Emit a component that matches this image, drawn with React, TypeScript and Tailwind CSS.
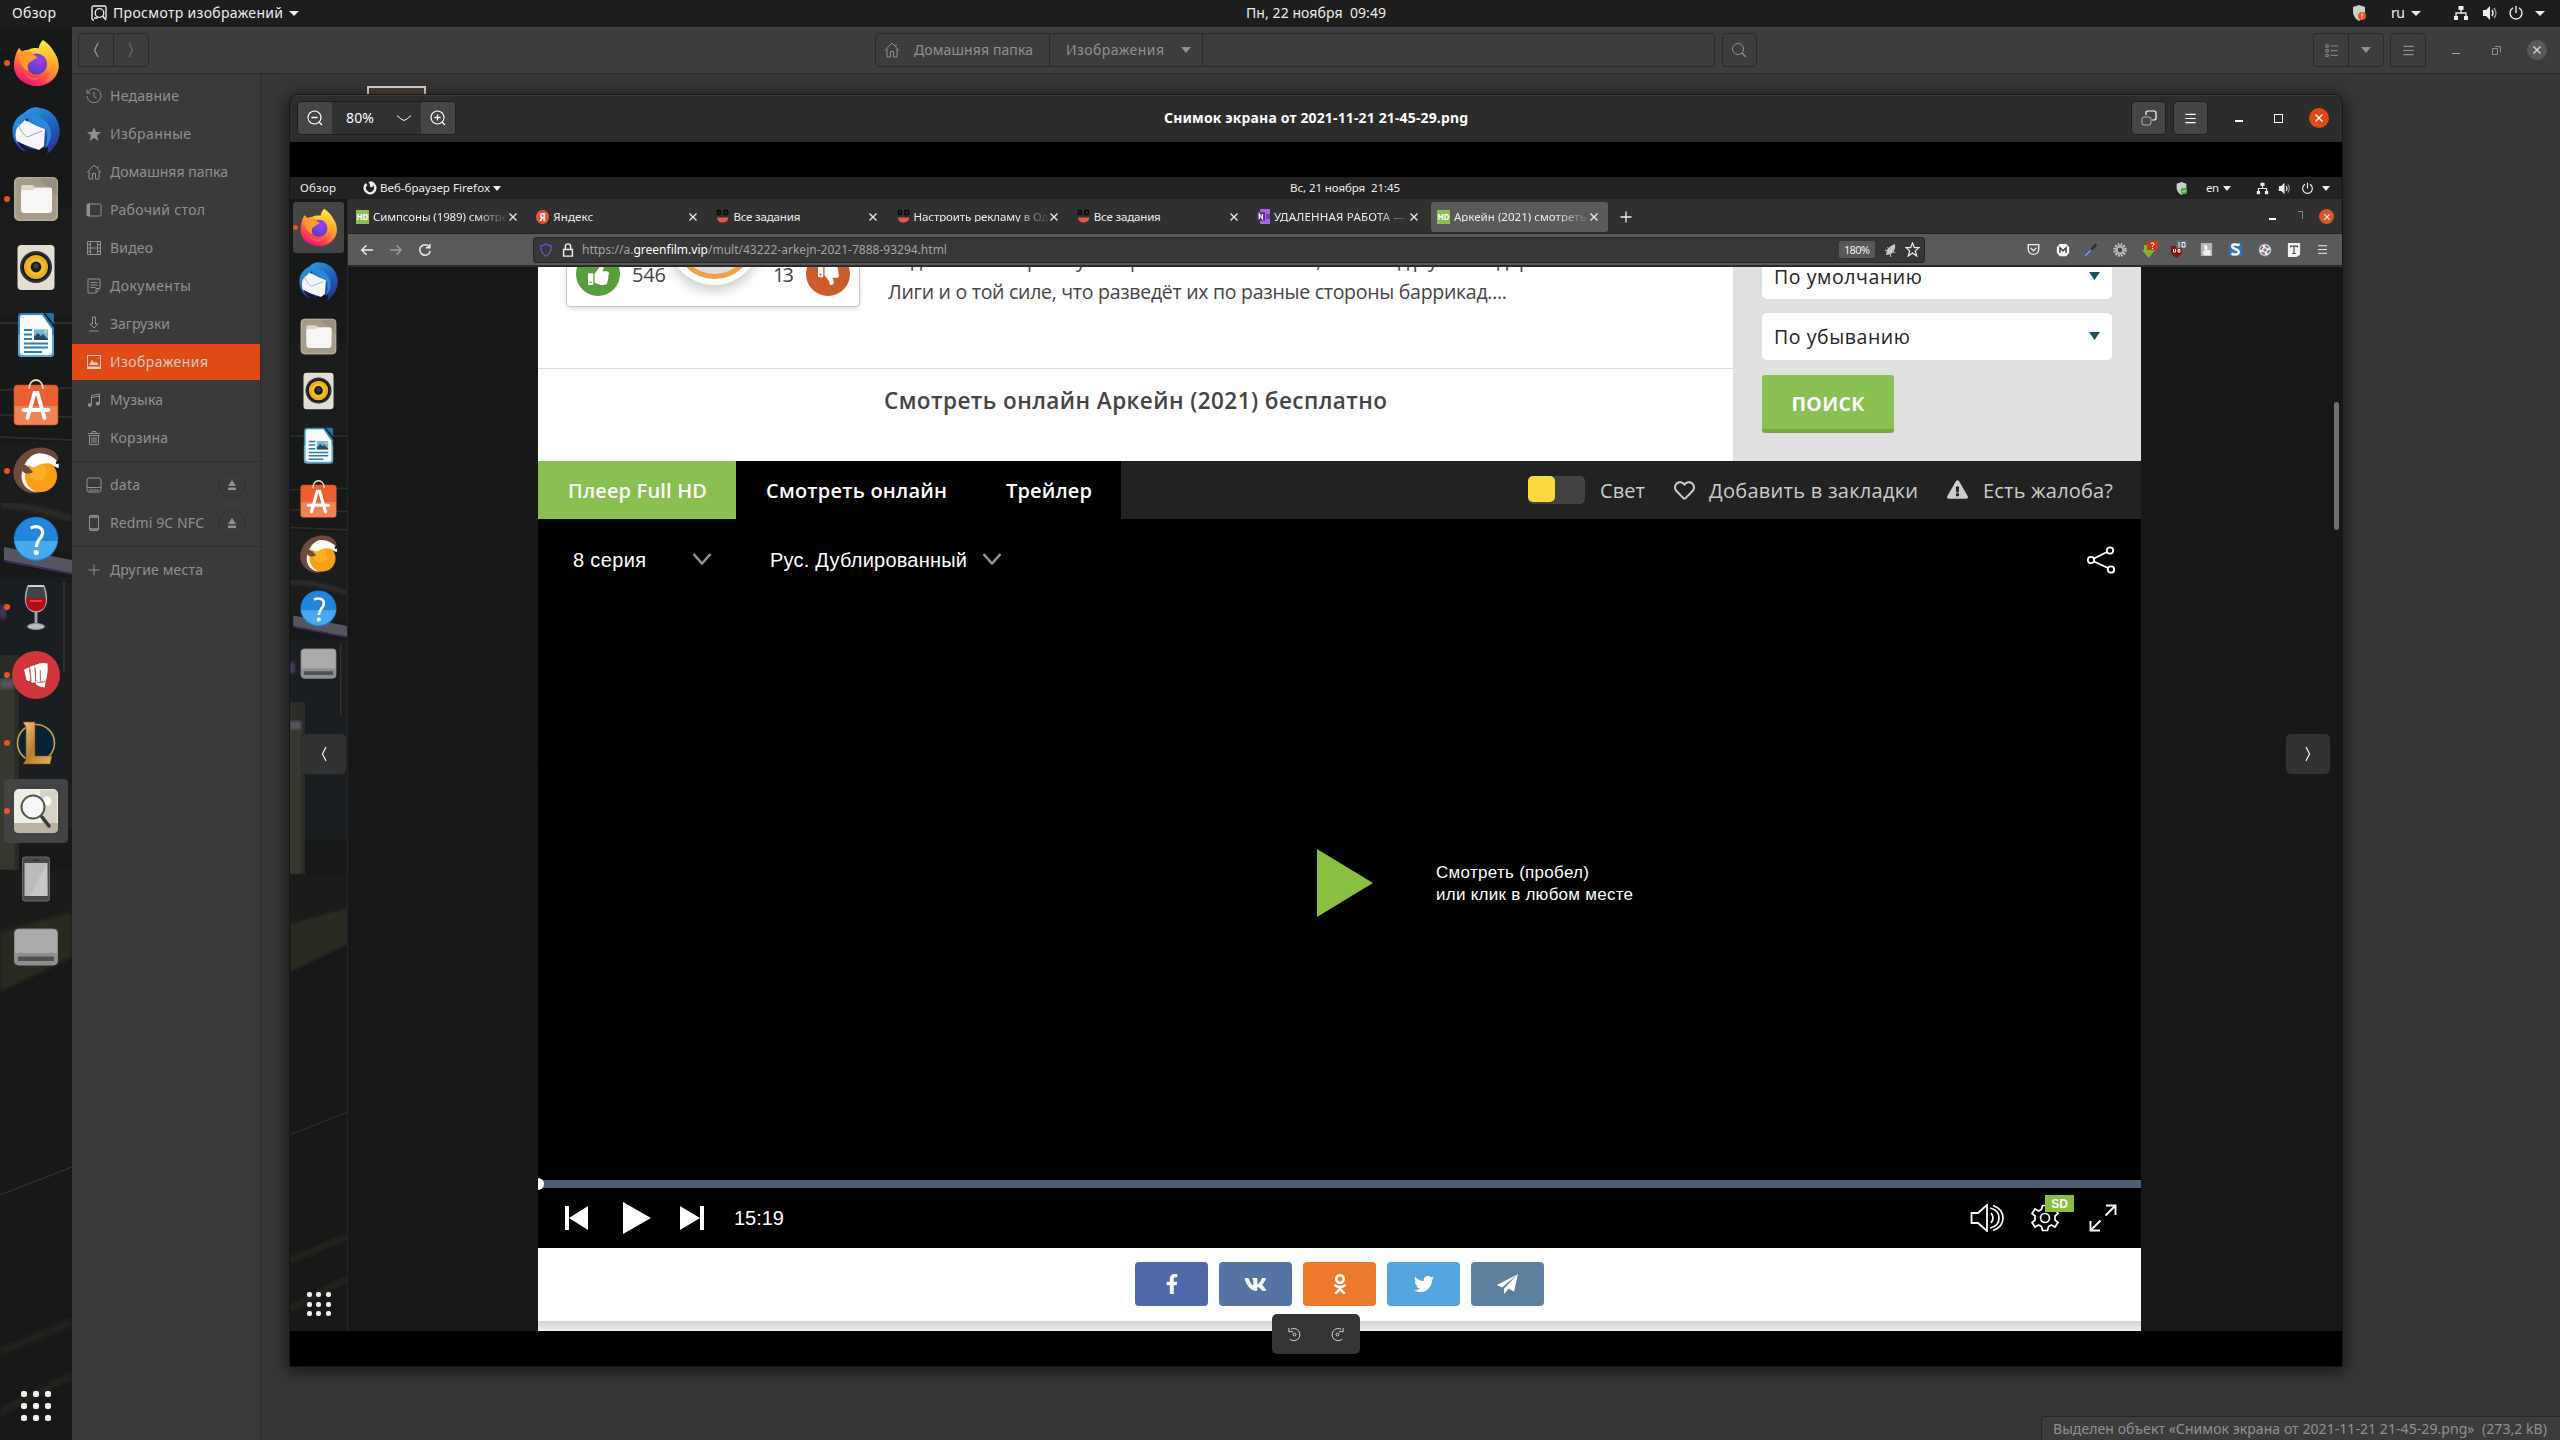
import React, { useLayoutEffect, useRef, useState } from "react";
import {
  FaFacebookF,
  FaVk,
  FaOdnoklassniki,
  FaTwitter,
  FaExclamationTriangle,
  FaRegHeart,
  FaThumbsUp,
  FaThumbsDown,
} from "react-icons/fa";

/* Text tracked so that it fills exactly `w` pixels. */
function Fit({ w, className = "", children }: { w: number; className?: string; children: React.ReactNode }) {
  const ref = useRef<HTMLSpanElement>(null);
  const [spacing, setSpacing] = useState(0);
  useLayoutEffect(() => {
    const el = ref.current;
    if (!el) return;
    const n = (el.textContent || "").length;
    setSpacing((w - el.getBoundingClientRect().width) / Math.max(1, n - 1));
  }, [w]);
  return (
    <span ref={ref} className={"inline-block shrink-0 self-auto whitespace-pre " + className} style={{ letterSpacing: spacing, marginRight: -spacing }}>
      {children}
    </span>
  );
}

type S = { s?: number; className?: string };

function Svg({ w = 16, h, vb = "0 0 16 16", className = "", children }: { w?: number; h?: number; vb?: string; className?: string; children: React.ReactNode }) {
  return (
    <svg width={w} height={h ?? w} viewBox={vb} fill="none" stroke="currentColor" className={"shrink-0 " + className}>
      {children}
    </svg>
  );
}

/* ---------- dock icons, all on a 48px grid ---------- */
function Firefox({ s = 48 }: S) {
  return (
    <Svg w={s} vb="0 0 48 48">
      <defs>
        <linearGradient id="ffa" x1="0.8" y1="0" x2="0.25" y2="1">
          <stop offset="0.05" stopColor="#fff44f" />
          <stop offset="0.35" stopColor="#ffa436" />
          <stop offset="0.65" stopColor="#ff4f4a" />
          <stop offset="1" stopColor="#e5097f" />
        </linearGradient>
        <radialGradient id="ffb" cx="0.6" cy="0.3" r="0.8">
          <stop offset="0" stopColor="#a03ff0" />
          <stop offset="1" stopColor="#4b3fb5" />
        </radialGradient>
        <linearGradient id="ffc" x1="0.6" y1="0" x2="0.5" y2="1">
          <stop offset="0" stopColor="#fff04a" />
          <stop offset="0.5" stopColor="#ffb02c" />
          <stop offset="1" stopColor="#ff6a3a" />
        </linearGradient>
      </defs>
      <g stroke="none">
        <path d="M7 9c1 2 2 3 3 4 2-2 4-2 6-2 5-3 12-2 18 0 9 4 12 10 12.500 17C46 39 36.500 47 25 47S2 39 2 27C2 20 4 13 7 9z" fill="url(#ffa)" />
        <path d="M31 1c6 4 9 8 11 12 4 5 5 11 4.500 16C45 38 38 43 32 43c6-4 8-9 6-15-2-8-9-10-11-16-1-5 2-9 4-11z" fill="url(#ffc)" />
        <circle cx="24.500" cy="25" r="10.500" fill="url(#ffb)" />
        <path d="M7 9c2 3 5 4 8 4 3-1 5 0 6 2l5 4c-3 0-4 2-6 3-5 2-5 6-3 10C8 30 6 18 7 9z" fill="#ff9a2b" />
        <path d="M10 28c2 9 12 14 20 9-2 6-16 7-20-9z" fill="#ff7139" opacity="0.7" />
      </g>
    </Svg>
  );
}
function Thunderbird({ s = 48 }: S) {
  return (
    <Svg w={s} vb="0 0 48 48">
      <defs>
        <linearGradient id="tba" x1="0.2" y1="0" x2="0.8" y2="1">
          <stop offset="0" stopColor="#2f9fe6" />
          <stop offset="0.5" stopColor="#1c66bd" />
          <stop offset="1" stopColor="#27348f" />
        </linearGradient>
      </defs>
      <g stroke="none">
        <path d="M12 6C16 2 22-1 28 1c10 1 18 9 19.500 20C49 33 42 42 35 47c1-3 1-5 1-7L12 44C5 40 0 32 .500 23 1 16 5 9 12 6z" fill="url(#tba)" />
        <path d="M5 21l8-8 12 6 8 3-1 17-5 4L5 35c-2-5-2-10 0-14z" fill="#f4f6fb" />
        <path d="M6 17c2 5 4 9 9 13l15-6" fill="none" stroke="#9aa6bd" strokeWidth="1" />
        <path d="M12 8c5 0 8 3 9 8l12 6c4 6 2 14 0 19 7-7 8-18 2-25-5-7-14-10-23-8z" fill="#2f86d8" />
        <path d="M5 34l17 9c-6 3-12 1-17-9z" fill="#20123a" />
        <circle cx="15" cy="13" r="1.300" fill="#0d2d66" />
      </g>
    </Svg>
  );
}
function Files({ s = 48 }: S) {
  return (
    <Svg w={s} vb="0 0 48 48">
      <g stroke="none">
        <rect x="2" y="2" width="44" height="44" rx="5" fill="#8d8673" />
        <rect x="2.800" y="2.800" width="42.400" height="42.400" rx="4.500" fill="#a49c88" stroke="#c6c0b1" strokeWidth="0.800" />
        <path d="M26 3h15a4 4 0 0 1 4 4v14z" fill="#8f8875" opacity="0.600" />
        <path d="M9 12q0-2 2-2h9q2 0 3 2l1.500 2H38q2 0 2 2v8H9z" fill="#dcd8cf" />
        <path d="M9 17q0-2 2-2h10l3-2.500H38q2 0 2 2V35q0 3-3 3H12q-3 0-3-3z" fill="#f7f6f4" />
      </g>
    </Svg>
  );
}
function Rhythmbox({ s = 48 }: S) {
  return (
    <Svg w={s} vb="0 0 48 48">
      <g stroke="none">
        <rect x="5.500" y="2" width="37" height="45" rx="4" fill="#e3ded2" />
        <circle cx="24" cy="24" r="16" fill="#2d3036" />
        <circle cx="24" cy="24" r="13.800" fill="#17181a" />
        <circle cx="24" cy="24" r="12" fill="#e8ae1d" />
        <circle cx="24" cy="24" r="8.500" fill="#f1c033" />
        <circle cx="24" cy="24" r="5.400" fill="#1c1c1c" />
        <circle cx="24" cy="23" r="2.500" fill="#3d3d3d" />
      </g>
    </Svg>
  );
}
function Writer({ s = 48 }: S) {
  return (
    <Svg w={s} vb="0 0 48 48">
      <g stroke="none">
        <path d="M10 2h21l11 15v25q0 4-4 4H10q-4 0-4-4V6q0-4 4-4z" fill="#2a86bd" />
        <path d="M6 24h36v18q0 4-4 4H10q-4 0-4-4z" fill="#57acd6" />
        <path d="M10 4h20l10 14v23q0 3-3 3H11q-3 0-3-3V7q0-3 2-3z" fill="#fbfbfb" />
        <path d="M33 2h7q2 0 2 2v9z" fill="#1c74a8" />
        <path d="M12 19h8M12 23.500h8M12 28h8M12 32.500h24M12 36.500h24M12 41h18" stroke="#2980ba" strokeWidth="1.800" />
        <rect x="22" y="18.500" width="14" height="10.500" fill="#6db6e3" />
        <path d="M22 29v-3l4-4 3 3 2-2 5 5v1z" fill="#33485c" />
        <circle cx="33.500" cy="20.800" r="1.500" fill="#f5cf42" />
      </g>
    </Svg>
  );
}
function Software({ s = 48 }: S) {
  return (
    <Svg w={s} vb="0 0 48 48" className="overflow-visible">
      <rect x="2" y="6" width="44" height="40" rx="3.500" fill="#ea6032" stroke="#cf4d20" strokeWidth="0.500" />
      <path d="M2.500 27h43v15q0 3.500-3.500 3.500H6q-3.500 0-3.500-3.500z" fill="#f08253" stroke="none" />
      <path d="M17 10c0-12 14-12 14 0" stroke="#f0dcb4" strokeWidth="1.800" />
      <path d="M15.500 39L22.500 14h3l7 25M11.500 31h25" stroke="#fff" strokeWidth="3.800" strokeLinecap="round" />
    </Svg>
  );
}
function Lutris({ s = 48 }: S) {
  return (
    <Svg w={s} vb="0 0 48 48">
      <g stroke="none">
        <path d="M24 1C34-1 45 3 46.500 12L38 18 20 30l12 14C20 50 6 44 2 31-1 17 10 3 24 1z" fill="#6f4a3a" />
        <path d="M21 8C28 4 40 7 47 16l-1 5-7-3-9-1c-10 2-16 9-13 20 2 5 6 8 11 8C14 46 6 34 11 22c1-5 4-10 10-14z" fill="#fbf6ee" />
        <circle cx="29" cy="29" r="16" fill="#f99f17" />
        <circle cx="26" cy="25" r="9" fill="#ffb92c" opacity="0.600" />
        <path d="M15 15c3-7 21-11 31 1l1 5c-7-6-16-6-22-2-4 2-8 1-10-4z" fill="#fff" />
        <path d="M9 20c3-5 7-1 12 5-5 3-11 2-12-5z" fill="#6f4a3a" />
        <circle cx="45.500" cy="15.500" r="1.700" fill="#2b1a12" />
      </g>
    </Svg>
  );
}
function Help({ s = 48 }: S) {
  return (
    <Svg w={s} vb="0 0 48 48">
      <circle cx="24" cy="24" r="22" fill="#1f86db" stroke="#1a6db4" strokeWidth="0.500" />
      <path d="M2.300 26h43.400A22 22 0 0 1 2.300 26z" fill="#4aa9ea" stroke="none" />
      <path d="M18.500 13c9-4 14.500 2 11 8.500-2 3-5 4.500-5 10.500" stroke="#fff" strokeWidth="3.200" />
      <circle cx="24.300" cy="37.500" r="2.500" fill="#fff" stroke="none" />
    </Svg>
  );
}
function Wine() {
  return (
    <Svg w={48} vb="0 0 48 48">
      <path d="M16 3c-4 12-4 24 8 26 12-2 12-14 8-26z" fill="#4a4d50" fillOpacity="0.800" stroke="#a5a8aa" strokeWidth="1.600" />
      <path d="M14.500 15h19c1 8-2 13-9.500 13s-10.500-5-9.500-13z" fill="#b50a14" stroke="none" />
      <path d="M18 18h12" stroke="#e25058" strokeWidth="1.500" />
      <path d="M24 29v14" stroke="#a5a8aa" strokeWidth="2.800" />
      <ellipse cx="24" cy="43.500" rx="8.500" ry="3" fill="#b9bbbd" stroke="#8c8e90" />
      <path d="M16.500 3h15" stroke="#d6d6d6" strokeWidth="2" />
    </Svg>
  );
}
function Fist() {
  return (
    <Svg w={48} vb="0 0 48 48">
      <g stroke="none">
        <circle cx="24" cy="24" r="24" fill="#d0363b" />
        <path d="M12 18.500l5-2 1.500 13q-3 1.500-4-.500z" fill="#fff" />
        <path d="M17.500 16l5-2 1 17q-3.500 1.500-4.500-.500z" fill="#fff" />
        <path d="M23 14q3-1.500 5-1.500l.500 18q-3 1.500-4.500 0z" fill="#fff" />
        <path d="M27 12.500q5-1.200 8.500 0 1 8-1 15l-1 3-4.500 0z" fill="#fff" />
        <path d="M23 31q5 1.500 10.500 0l-.800 5.500q-4-.300-8-2.500z" fill="#fff" />
      </g>
      <path d="M18 18l1.200 12M23.200 17l.500 13M28.300 19v10" stroke="#d0363b" strokeWidth="0.800" />
    </Svg>
  );
}
function League() {
  return (
    <Svg w={48} vb="0 0 48 48">
      <defs>
        <linearGradient id="lol" x1="0" y1="0" x2="1" y2="1">
          <stop offset="0" stopColor="#f0c878" />
          <stop offset="0.500" stopColor="#b97c2c" />
          <stop offset="1" stopColor="#e6b65d" />
        </linearGradient>
      </defs>
      <circle cx="24" cy="24" r="18.500" fill="#072338" stroke="#c9a24e" strokeWidth="1.600" />
      <path d="M11 3h12v34h17l-2 8H11l3-4V8z" fill="url(#lol)" stroke="#7a4b15" strokeWidth="0.600" />
    </Svg>
  );
}
function Viewer() {
  return (
    <Svg w={48} vb="0 0 48 48">
      <g stroke="none">
        <rect x="2" y="2" width="44" height="44" rx="5" fill="#eeede6" />
        <path d="M28 3h13q4 0 4 4v30H30z" fill="#d6d3c6" />
        <path d="M2 36h44v5q0 5-5 5H7q-5 0-5-5z" fill="#b9b3a0" />
        <circle cx="35" cy="14" r="4.500" fill="#fafafa" />
      </g>
      <circle cx="21" cy="20" r="11.500" fill="#f6f6f4" stroke="#55554f" strokeWidth="2" />
      <path d="M30 30l7 9" stroke="#3a3a3a" strokeWidth="3.500" strokeLinecap="round" />
    </Svg>
  );
}
function Phone() {
  return (
    <Svg w={48} vb="0 0 48 48">
      <rect x="10.500" y="2" width="27" height="44" rx="2.500" fill="#47494b" stroke="#646668" />
      <rect x="12.500" y="8" width="23" height="33" fill="#b9babb" stroke="none" />
      <path d="M35 8L18 41h17.500z" fill="#c6c7c8" stroke="none" />
      <path d="M21 5h6" stroke="#222" />
    </Svg>
  );
}
function Drive({ s = 48 }: S) {
  return (
    <Svg w={s} vb="0 0 48 48">
      <rect x="2.500" y="6" width="43" height="36" rx="4" fill="#aaa" stroke="#8b8b8b" />
      <path d="M3 30h42v8q0 4-4 4H7q-4 0-4-4z" fill="#8e8e8e" stroke="none" />
      <rect x="6" y="33.500" width="36" height="4.500" fill="#505050" stroke="none" />
    </Svg>
  );
}

function Wallpaper() {
  return (
    <svg viewBox="0 0 72 1413" preserveAspectRatio="none" className="absolute inset-0 h-full w-full" fill="none">
      <defs>
        <filter id="soft"><feGaussianBlur stdDeviation="2" /></filter>
      </defs>
      <rect width="72" height="1413" fill="#171818" />
      <rect y="180" width="72" height="110" fill="#1a1d1b" />
      <path d="M0 296H72M0 363l72-2M0 388l72 2M0 410l72 3" stroke="#2e2d26" strokeWidth="2" />
      <rect y="415" width="72" height="110" fill="#1b1c1c" />
      <path d="M0 478q30 0 72 14" stroke="#2f2f2b" strokeWidth="6" filter="url(#soft)" />
      <path d="M4 520L72 533v13L4 533z" fill="#56545e" />
      <path d="M4 534L72 547" stroke="#3c2e6c" strokeWidth="1.500" />
      <path d="M0 550h72v250H0z" fill="#1e2123" opacity="0.700" />
      <path d="M64 555v90" stroke="#3a372f" strokeWidth="1.500" />
      <path d="M0 578h6v14H0z" fill="#453c68" filter="url(#soft)" />
      <path d="M0 628h19v215H0z" fill="#2d2b25" />
      <path d="M0 652h14v190H0z" fill="#37362f" />
      <path d="M0 652h14v10H0z" fill="#54575d" filter="url(#soft)" />
      <path d="M0 843h72v62H0z" fill="#1b1b1a" />
      <path d="M0 905L72 885v45L0 965z" fill="#2c2921" filter="url(#soft)" />
      <path d="M0 1168L72 1140" stroke="#3a3936" />
      <path d="M0 1325L72 1295M0 1385L72 1348" stroke="#23221d" strokeWidth="8" filter="url(#soft)" />
    </svg>
  );
}

function AppGrid({ gap, dot }: { gap: string; dot: string }) {
  return (
    <div className={"grid grid-cols-3 " + gap}>
      {Array.from({ length: 9 }, (_, i) => (
        <span key={i} className={"rounded-[2px] bg-[#f0f0ee] " + dot} />
      ))}
    </div>
  );
}

/* ---------- small glyphs ---------- */
const Caret = ({ className = "" }: { className?: string }) => (
  <svg width="10" height="6" viewBox="0 0 10 6" preserveAspectRatio="none" className={"shrink-0 " + className}><path d="M0 0h10L5 6z" fill="currentColor" /></svg>
);
const Network = ({ s = 16 }: S) => (
  <Svg w={s}><path d="M5.500 1h5v4h-5zM1 11h4v4H1zM11 11h4v4h-4z" fill="currentColor" stroke="none" /><path d="M8 5v3M3 11V8h10v3" strokeWidth="1.300" /></Svg>
);
const Sound = ({ s = 16 }: S) => (
  <Svg w={s}><path d="M1 5h3l4-4v14l-4-4H1z" fill="currentColor" stroke="none" /><path d="M10 5q2 3 0 6" strokeWidth="1.500" /><path d="M12 3q4 5 0 10" strokeWidth="1.300" opacity="0.600" /></Svg>
);
const Power = ({ s = 16 }: S) => (
  <Svg w={s}><path d="M5 2.800a6 6 0 1 0 6 0M8 1v7" strokeWidth="1.400" /></Svg>
);
const Shield = ({ s = 16, ok = false }: S & { ok?: boolean }) => (
  <Svg w={s}><path d="M8 0l6 2v6q-1 5-6 8-5-3-6-8V2z" fill="#cfcdc9" stroke="none" /><circle cx="11" cy="11" r="4" fill={ok ? "#3fae49" : "#e95420"} stroke="none" /><path d={ok ? "M9 11l1.500 1.500L13 10" : "M11 8.500v3M11 12.500v1"} stroke="#fff" /></Svg>
);
const Menu = ({ s = 16 }: S) => <Svg w={s}><path d="M2.500 3.500h11M2.500 8h11M2.500 12.500h11" strokeWidth="1.300" /></Svg>;
const Cross = ({ s = 10 }: S) => <Svg w={s} vb="0 0 10 10"><path d="M1.500 1.500l7 7M8.500 1.500l-7 7" strokeWidth="1.300" /></Svg>;
const Home = () => <Svg><path d="M1 8.500L8 1l7 7.500M3 7v8h3.500V9.500h3V15H13V7M12 2v2" /></Svg>;
const Chev = ({ d, className = "" }: { d: string; className?: string }) => <Svg className={className}><path d={d} strokeWidth="1.100" /></Svg>;
const LEFT = "M10 1L6.500 8l3.500 7";
const RIGHT = "M6 1l3.500 7L6 15";

const places: [string, number, React.ReactNode][] = [
  ["Недавние", 69, <Svg><path d="M2 4a7 7 0 1 1-1 4M1 1.500V5h3.500M8 4v4.500l2.500 2" /></Svg>],
  ["Избранные", 81, <Svg><path d="M8 1l2 5h5l-4 3.500L12.500 15 8 11.700 3.500 15 5 9.500 1 6h5z" fill="currentColor" stroke="none" /></Svg>],
  ["Домашняя папка", 118, <Home />],
  ["Рабочий стол", 95, <Svg><rect x="1" y="2" width="14" height="12" rx="1" /><path d="M2.500 2v12" strokeWidth="3" /></Svg>],
  ["Видео", 43, <Svg><path d="M1.500 1.500h13v13h-13zM4.500 1v14M11.500 1v14M4.500 8h7M1 4.700h3M1 8h3M1 11.300h3M12 4.700h3M12 8h3M12 11.300h3" /></Svg>],
  ["Документы", 81, <Svg><path d="M2 1h12v9l-4 5H2zM4.500 4.500h7M4.500 7h7M4.500 9.500h5M10 14.500V10.500h4" /></Svg>],
  ["Загрузки", 60, <Svg><path d="M6.500 1h3v7H12l-4 4-4-4h2.500zM3 15h10" /></Svg>],
  ["Изображения", 98, <Svg><path d="M1.500 1.500h13v13h-13z" /><path d="M1 12.500h14V15H1zM3 11l3-5 2.500 3L10 7.500 13 11zM12 3l1 1.500-1.500.500z" fill="currentColor" stroke="none" /></Svg>],
  ["Музыка", 53, <Svg><path d="M5.500 13V3.500L13.500 2v9.500M5.500 5.500l8-1.500" /><circle cx="3.800" cy="13" r="2" fill="currentColor" stroke="none" /><circle cx="11.800" cy="11.500" r="2" fill="currentColor" stroke="none" /></Svg>],
  ["Корзина", 58, <Svg><path d="M2 3.500h12M6 3V1.500h4V3M3.500 6v8.500h9V6M2.500 5.500h11M6 7v6M8 7v6M10 7v6" /></Svg>],
];

const dock: { icon: React.ReactNode; dot?: boolean; on?: boolean }[] = [
  { icon: <Firefox />, dot: true },
  { icon: <Thunderbird /> },
  { icon: <Files />, dot: true },
  { icon: <Rhythmbox /> },
  { icon: <Writer /> },
  { icon: <Software /> },
  { icon: <Lutris />, dot: true },
  { icon: <Help /> },
  { icon: <Wine />, dot: true },
  { icon: <Fist />, dot: true },
  { icon: <League />, dot: true },
  { icon: <Viewer />, dot: true, on: true },
  { icon: <Phone /> },
  { icon: <Drive /> },
];

const innerDock = [
  <Firefox s={39} />, <Thunderbird s={39} />, <Files s={39} />, <Rhythmbox s={39} />, <Writer s={39} />,
  <Software s={39} />, <Lutris s={39} />, <Help s={39} />, <Drive s={39} />,
];

const HD = () => <span className="flex h-[14px] w-[13px] items-center justify-center bg-[#8abf51] text-[8px] font-bold leading-none text-white">HD</span>;
const Ya = () => <span className="flex h-[14px] w-[13px] items-center justify-center rounded-full bg-[#ee4b33] text-[10px] font-bold leading-none text-white">Я</span>;
const Do = () => (
  <Svg w={13} h={15} vb="0 0 13 15"><path d="M1.500 1.500h2.500q1 2 0 4H1.500zM8 1.500h3q1.500 2 0 4H8z" stroke="#0a0a0a" strokeWidth="1.600" /><path d="M1 8.500h11.500q-1 5-6 5T1 8.500z" fill="#e0594a" stroke="none" /></Svg>
);
const OneNote = () => (
  <Svg w={13} h={15} vb="0 0 13 15"><path d="M3 0h10v15H3z" fill="#a868dd" stroke="none" /><path d="M9 5h4v5H9z" fill="#7c3bb5" stroke="none" /><path d="M0 3h8v9H0z" fill="#5d2d95" stroke="none" /><path d="M2.300 10V5l3.200 5V5" stroke="#fff" strokeWidth="1.200" /></Svg>
);

const tabs: { icon: React.ReactNode; text: string; w: number; fade?: boolean; on?: boolean }[] = [
  { icon: <HD />, text: "Симпсоны (1989) смотре", w: 135, fade: true },
  { icon: <Ya />, text: "Яндекс", w: 40 },
  { icon: <Do />, text: "Все задания", w: 67 },
  { icon: <Do />, text: "Настроить рекламу в Од", w: 135, fade: true },
  { icon: <Do />, text: "Все задания", w: 67 },
  { icon: <OneNote />, text: "УДАЛЕННАЯ РАБОТА —", w: 131, fade: true },
  { icon: <HD />, text: "Аркейн (2021) смотреть", w: 132, fade: true, on: true },
];

const extensions = [
  <Svg w={13}><path d="M1.500 2h13v6q-1 6-6.500 6T1.500 8zM4.500 6L8 9.500 11.500 6" strokeWidth="1.700" /></Svg>,
  <Svg w={14}><path d="M4 1h8l3 4v6l-3 4H4l-3-4V5z" fill="#fff" stroke="none" /><path d="M4.500 11V5.500L8 9l3.500-3.500V11" stroke="#444" strokeWidth="1.800" /></Svg>,
  <Svg w={14}><path d="M2 14L9 7" stroke="#4a63c9" strokeWidth="3" /><path d="M1.500 14.500L7 9" stroke="#c9d2f0" strokeWidth="1" /><path d="M8.500 7.500L14 1.500" stroke="#2c2c2c" strokeWidth="3" /></Svg>,
  <Svg w={14}><circle cx="8" cy="8" r="6.500" stroke="#c4c4c4" strokeWidth="2.500" strokeDasharray="2 1.400" /><circle cx="8" cy="8" r="4" fill="#444" stroke="#b0b0b0" strokeWidth="3" /></Svg>,
  <Svg w={18} vb="0 0 18 18" className="-mt-[2px]"><path d="M4 5h7v5h4l-6.500 8L2 10h2z" fill="#80b626" stroke="none" /><path d="M7 1h11v9H7z" fill="#d1341d" stroke="none" /><path d="M11 3.500q3-1.500 3 .500 0 1-1.500 2v1M12.500 8v1" stroke="#fff" /></Svg>,
  <Svg w={18} vb="0 0 18 18" className="-mt-[2px]"><path d="M2 6h11v6q-1 4-5.500 6-4.500-2-5.500-6z" fill="#8a1010" stroke="none" /><path d="M4.500 9v3h2V9M9 9.500h2V12H9z" stroke="#fff" /><path d="M7 0h11v8.500H7z" fill="#5c646c" stroke="none" /><path d="M10 2v5.500M13 2.500h3V7h-3z" stroke="#fff" /></Svg>,
  <Svg w={13}><path d="M1 0h14v16H1z" fill="#b5b5b5" stroke="none" /><path d="M5 3q4-2 4 2v4h4v6H5l-2-5h3z" fill="#f3f3f3" stroke="none" /></Svg>,
  <Svg w={13}><path d="M0 0h16v16H0z" fill="#3173b4" stroke="none" /><path d="M13 2.500q-9-2-9 1.500c0 4 8 3 8 7s-6 3.500-9 2" stroke="#fff" strokeWidth="3" /></Svg>,
  <Svg w={14}><circle cx="8" cy="8" r="7" fill="#e8eef3" stroke="#4d93c4" strokeWidth="1" /><circle cx="8" cy="8" r="4.500" fill="#e8eef3" stroke="#c33b2d" strokeWidth="2" strokeDasharray="4 3" /><circle cx="8" cy="8" r="2" fill="#4d93c4" stroke="none" /></Svg>,
  <Svg w={14}><path d="M1 0h14v13l-4 3H1z" fill="#f2f2f2" stroke="none" /><path d="M4 5V3.500h8V5M8 3.500V12M6 12h4" stroke="#444" strokeWidth="1.300" /></Svg>,
  <Menu s={13} />,
];

/* Segments of the partly scrolled-away description line. */
const scrolledLine: [string, number][] = [
  ["на ", 23], ["два момента ", 116], ["роль ", 49], ["умов ", 54], ["рано и вечно вместе, пока их ", 268], ["друг на ", 99], ["дар", 34],
];

function InnerScreen() {
  return (
    <div className="flex h-[1154px] w-full flex-col overflow-hidden bg-[#171717] text-[#eee]">
      {/* desktop panel */}
      <div className="flex h-[22px] shrink-0 items-center bg-[#222] text-[11.500px] leading-none">
        <Fit w={36} className="ml-[10px]">Обзор</Fit>
        <Svg w={14} className="ml-[27px]"><path d="M4 3.500A6 6 0 1 0 12.500 4Q10 1.500 8.500 2q1.500 2 1 5" strokeWidth="3" /></Svg>
        <Fit w={110} className="ml-[3px]">Веб-браузер Firefox</Fit>
        <Caret className="ml-[3px] h-[5px] w-[8px]" />
        <Fit w={110} className="ml-[789px]">Вс, 21 ноября  21:45</Fit>
        <div className="ml-auto flex items-center pr-[12px]">
          <Shield s={13} ok />
          <Fit w={13} className="ml-[18px]">en</Fit>
          <Caret className="ml-[4px] mr-[25px] h-[5px] w-[8px]" />
          <Network s={13} />
          <span className="w-[9px]" /><Sound s={13} />
          <span className="w-[10px]" /><Power s={13} />
          <Caret className="ml-[8px] h-[5px] w-[8px]" />
        </div>
      </div>
      <div className="flex min-h-0 flex-1">
        {/* dock */}
        <div className="relative flex w-[58px] shrink-0 flex-col overflow-hidden border-r border-[#262626] bg-[#1c1c1c]">
          <Wallpaper />
          <div className="relative flex h-full flex-col items-center pt-[1px]">
            {innerDock.map((icon, i) => (
              <div key={i} className="flex h-[54.500px] w-full items-center justify-center">
                <div className={"relative flex h-[51px] w-[51px] items-center justify-center rounded-[3px] " + (i === 0 ? "bg-[#444]" : "")}>
                  {i === 0 && <span className="absolute left-0 top-[23px] h-[5px] w-[5px] rounded-full bg-[#e95420]" />}
                  {icon}
                </div>
              </div>
            ))}
            <div className="mt-auto pb-[15px]"><AppGrid gap="gap-[4.500px]" dot="h-[5px] w-[5px]" /></div>
          </div>
        </div>
        {/* browser */}
        <div className="flex min-w-0 flex-1 flex-col">
          <div className="flex h-[35px] shrink-0 items-center border-b border-[#232323] bg-[#303030] pt-px text-[11.500px] leading-none">
            {tabs.map((t, i) => (
              <div key={i} className={"flex h-[30px] shrink-0 items-center rounded-[3px] " + (t.on ? "ml-[9px] w-[177px] bg-[#5a5a5a] pl-[6px]" : i ? "ml-[8.200px] w-[172px] pl-[7px]" : "ml-[1px] w-[172px] pl-[7px]")}>
                {t.icon}
                <span className={"ml-[4px] flex w-[136px] items-center " + (t.fade ? "[mask-image:linear-gradient(to_right,black_75%,transparent)]" : "")}>
                  <Fit w={t.w}>{t.text}</Fit>
                </span>
                <span className="-ml-[1px]"><Cross s={10} /></span>
              </div>
            ))}
            <Svg w={12} vb="0 0 12 12" className="ml-[12px]"><path d="M6 .500v11M.500 6h11" strokeWidth="1.300" /></Svg>
            <div className="ml-auto flex items-center pr-[8px]">
              <span className="mt-[5px] h-[2px] w-[7px] bg-white" />
              <span className="ml-[22px] mt-[-3px] h-[8px] w-[5px] border-r border-t border-[#888]" />
              <span className="ml-[16px] flex h-[15px] w-[15px] items-center justify-center rounded-full bg-[#d3592b]"><Cross s={8} /></span>
            </div>
          </div>
          <div className="flex h-[33px] shrink-0 items-center border-b-2 border-[#2b2b2b] bg-[#5a5a5a] text-[11.500px] leading-none">
            <Svg w={14} className="ml-[12px]"><path d="M15 8H2M7.500 2.500L2 8l5.500 5.500" strokeWidth="1.700" /></Svg>
            <Svg w={14} className="ml-[15px] text-[#999]"><path d="M1 8h13M8.500 2.500L14 8l-5.500 5.500" strokeWidth="1.700" /></Svg>
            <Svg w={14} className="ml-[15px]"><path d="M13 4.500A6 6 0 1 0 14 9M13.500 1v4.500H9" strokeWidth="1.700" /></Svg>
            <div className="ml-[101px] flex h-[26px] w-[1392px] items-center rounded-[3px] border border-[#262626] bg-[#373737]">
              <Svg w={14} className="ml-[5px] text-[#5a5ac8]"><path d="M8 1q3 2 6 2 0 9-6 12Q2 12 2 3q3 0 6-2z" strokeWidth="1.500" /></Svg>
              <Svg w={14} className="ml-[8px]"><path d="M3 7.500h10V15H3zM5 7V4q0-3 3-3t3 3v3" strokeWidth="1.700" /></Svg>
              <Fit w={365} className="ml-[7px] mt-[1px] text-[12px] text-[#a3a3a3]">https://a.<span className="text-white">greenfilm.vip</span>/mult/43222-arkejn-2021-7888-93294.html</Fit>
              <span className="ml-auto flex h-[17px] w-[36px] items-center justify-center rounded-[2px] bg-[#585858] text-[11px]"><Fit w={26}>180%</Fit></span>
              <Svg w={14} className="ml-[9px] text-[#c9c9c9]"><path d="M3 13q0-7 9-11 1 5-4 10zM1 8l3 1M7 13l1 3M4 5l2 2M10 10l3 1" fill="currentColor" strokeWidth="1.200" /></Svg>
              <Svg w={15} className="ml-[7px] mr-[4px]"><path d="M8 1l2 5h5l-4 3.500L12.500 15 8 11.700 3.500 15 5 9.500 1 6h5z" strokeWidth="1.300" /></Svg>
            </div>
            <div className="ml-auto mr-[5px] flex">
              {extensions.map((e, i) => (
                <span key={i} className="flex h-[18px] w-[28.900px] items-center justify-center">{e}</span>
              ))}
            </div>
          </div>
          {/* page */}
          <div className="relative flex min-h-0 flex-1 bg-gradient-to-r from-[#171717] via-[#191919] to-[#171717]">
            <div className="ml-[190px] flex h-full w-[1603px] flex-col bg-white font-['Open_Sans','Noto_Sans',sans-serif] text-[#444]">
              <div className="flex h-[194px] shrink-0">
                <div className="flex w-[1195px] flex-col">
                  <div className="flex h-[102px] border-b border-[#ddd]">
                    <div className="ml-[28px] h-[40px] w-[294px] overflow-visible rounded-b-[5px] border border-t-0 border-[#c5c5c5] shadow-[0_2px_4px_#0002]">
                      <div className="flex h-[40px] text-[20px] leading-none [clip-path:inset(0_0_-20px_0)]">
                        <span className="ml-[9px] -mt-[15px] flex h-[44px] w-[44px] items-center justify-center rounded-full bg-[#579f3c] text-[21px] text-white"><FaThumbsUp /></span>
                        <Fit w={34} className="ml-[12px] -mt-[2px]">546</Fit>
                        <span className="ml-[2px] -mt-[74px] flex h-[92px] w-[92px] items-center justify-center rounded-full bg-white shadow-[0_6px_12px_#0003]">
                          <span className="h-[79px] w-[79px] rounded-full border-[5px] border-[#eea043] bg-[#dedede]" />
                        </span>
                        <Fit w={21} className="ml-[13px] -mt-[2px]">13</Fit>
                        <span className="ml-[12px] -mt-[15px] flex h-[44px] w-[44px] items-center justify-center rounded-full bg-[#cd5c2d] text-[21px] text-white"><FaThumbsDown /></span>
                      </div>
                    </div>
                    <div className="ml-[28px] flex h-[60px] flex-col items-start overflow-hidden text-[19.500px] leading-[32px]">
                      <span className="-mt-[23px] flex h-[32px]">
                        {scrolledLine.map(([t, w]) => <Fit key={t} w={w}>{t}</Fit>)}
                      </span>
                      <Fit w={619} className="h-[32px]">Лиги и о той силе, что разведёт их по разные стороны баррикад....</Fit>
                    </div>
                  </div>
                  <div className="flex flex-1 justify-center pt-[18px] text-[22.500px] font-semibold leading-[28px]">
                    <Fit w={503}>Смотреть онлайн Аркейн (2021) бесплатно</Fit>
                  </div>
                </div>
                <div className="flex flex-1 flex-col bg-[#e0e0e0] pl-[29px] text-[19.500px] leading-none text-[#222]">
                  <div className="flex h-[32px] w-[350px] items-center justify-between rounded-b-[5px] bg-white pb-[13px] pl-[12px] pr-[12px]">
                    <Fit w={148}>По умолчанию</Fit><Caret className="-mt-[2px] h-[8px] w-[11px] text-[#1f5266]" />
                  </div>
                  <div className="mt-[14px] flex h-[47px] w-[350px] items-center justify-between rounded-[5px] bg-white pl-[12px] pr-[12px]">
                    <Fit w={136} className="mt-px">По убыванию</Fit><Caret className="-mt-[2px] h-[8px] w-[11px] text-[#1f5266]" />
                  </div>
                  <div className="mt-[15px] flex h-[58px] w-[132px] items-center justify-center rounded-[3px] border-b-4 border-[#75a743] bg-[#8abf51] pt-[3px] text-[19.500px] font-bold text-white">
                    <Fit w={73}>ПОИСК</Fit>
                  </div>
                </div>
              </div>
              {/* player tabs */}
              <div className="flex h-[58px] shrink-0 items-center bg-[#222] text-[20px] leading-none text-[#ccc]">
                <div className="flex h-full w-[198px] items-center bg-[#8abf51] pl-[30px] pt-[2px] font-semibold text-white"><Fit w={139}>Плеер Full HD</Fit></div>
                <div className="flex h-full w-[385px] items-center bg-black pl-[30px] pt-[2px] font-semibold text-white">
                  <Fit w={181}>Смотреть онлайн</Fit>
                  <Fit w={86} className="ml-[59px]">Трейлер</Fit>
                </div>
                <div className="ml-auto flex items-center pr-[28px] pt-[2px]">
                  <span className="-mt-[2px] flex h-[28px] w-[57px] rounded-[5px] bg-[#424242]"><span className="h-[26px] w-[27px] rounded-[5px] bg-[#f9d93f]" /></span>
                  <Fit w={45} className="ml-[15px]">Свет</Fit>
                  <FaRegHeart className="-mt-px ml-[29px] shrink-0 text-[21px]" />
                  <Fit w={209} className="ml-[14px]">Добавить в закладки</Fit>
                  <FaExclamationTriangle className="-mt-[3px] ml-[29px] shrink-0 text-[21px]" />
                  <Fit w={130} className="ml-[15px]">Есть жалоба?</Fit>
                </div>
              </div>
              {/* video */}
              <div className="flex h-[729px] shrink-0 flex-col bg-black font-['Liberation_Sans','Noto_Sans',sans-serif] text-white">
                <div className="mt-[20px] flex h-[42px] items-center text-[20px] leading-none">
                  <Fit w={73} className="ml-[35px]">8 серия</Fit>
                  <Svg w={20} h={12} vb="0 0 20 12" className="-mt-[2px] ml-[46px] text-[#8a97a5]"><path d="M1.500 1l8.500 9.500L18.500 1" strokeWidth="2.500" /></Svg>
                  <Fit w={197} className="ml-[58px]">Рус. Дублированный</Fit>
                  <Svg w={20} h={12} vb="0 0 20 12" className="-mt-[2px] ml-[15px] text-[#8a97a5]"><path d="M1.500 1l8.500 9.500L18.500 1" strokeWidth="2.500" /></Svg>
                  <Svg w={28} vb="0 0 28 28" className="ml-auto mr-[26px]"><circle cx="4" cy="14" r="3.200" strokeWidth="1.800" /><circle cx="23" cy="4.500" r="3.200" strokeWidth="1.800" /><circle cx="24" cy="23.500" r="3.200" strokeWidth="1.800" /><path d="M7 12.500l13-6.500M7 15.500l14 6.500" strokeWidth="1.800" /></Svg>
                </div>
                <div className="mt-[268px] flex h-[68px] items-center pl-[779px] text-[17px] leading-[22px]">
                  <Svg w={56} h={68} vb="0 0 56 68"><path d="M0 0l56 34L0 68z" fill="#8abf40" stroke="none" /></Svg>
                  <div className="ml-[63px] mt-px flex flex-col items-start">
                    <Fit w={153}>Смотреть (пробел)</Fit>
                    <Fit w={197}>или клик в любом месте</Fit>
                  </div>
                </div>
                <div className="relative mt-auto h-[8px] overflow-visible bg-[#4d5c73]"><span className="absolute -top-[2px] left-0 h-[12px] w-[6px] rounded-r-full bg-white" /></div>
                <div className="flex h-[60px] items-center text-[20px]">
                  <Svg w={23} h={24} vb="0 0 23 24" className="ml-[27px]"><path d="M0 0h4v24H0zM23 0v24L4 12z" fill="currentColor" stroke="none" /></Svg>
                  <Svg w={28} h={32} vb="0 0 28 32" className="ml-[35px]"><path d="M0 0l28 16L0 32z" fill="currentColor" stroke="none" /></Svg>
                  <Svg w={24} h={24} vb="0 0 24 24" className="ml-[29px]"><path d="M20 0h4v24h-4zM0 0v24l20-12z" fill="currentColor" stroke="none" /></Svg>
                  <Fit w={50} className="ml-[30px]">15:19</Fit>
                  <div className="relative ml-auto mr-[24px] flex items-center">
                    <Svg w={34} h={28} vb="0 0 34 28"><path d="M1.500 9h6.500l9-8v26l-9-8H1.500z" strokeWidth="1.800" /><path d="M21 9q4 5 0 10M20 4q9 2 9 10t-9 10M23 1.500q10 3.500 10 12.500T23 26.500" strokeWidth="1.700" /></Svg>
                    <Svg w={28} vb="0 0 28 28" className="ml-[27px]"><path d="M11.500 1.500h5l1 4 3 1.500 3.500-2 3 4.500-3 2.500v4l3 2.500-3 4.500-3.500-2-3 1.500-1 4h-5l-1-4-3-1.500-3.500 2L1 18.500 4 16v-4L1 9.500 4 5l3.500 2 3-1.500z" strokeWidth="1.700" /><circle cx="14" cy="14" r="4.500" strokeWidth="1.700" /></Svg>
                    <span className="absolute -top-[9px] left-[75px] flex h-[17px] w-[29px] items-center justify-center bg-[#8abf40] text-[12px] font-bold leading-none">SD</span>
                    <Svg w={28} vb="0 0 28 28" className="ml-[30px]"><path d="M17 1.500h9.500V11M26 2l-9.500 9.500M11 26.500H1.500V17M2 26l9.500-9.500" strokeWidth="1.900" /></Svg>
                  </div>
                </div>
              </div>
              <div className="flex h-[73px] shrink-0 items-start justify-center gap-[11px] pt-[14px] text-[20px] text-white">
                <span className="flex h-[44px] w-[73px] items-center justify-center rounded-[4px] bg-[#5069aa]"><FaFacebookF /></span>
                <span className="flex h-[44px] w-[73px] items-center justify-center rounded-[4px] bg-[#5674a3] text-[23px]"><FaVk /></span>
                <span className="flex h-[44px] w-[73px] items-center justify-center rounded-[4px] bg-[#ec792c]"><FaOdnoklassniki /></span>
                <span className="flex h-[44px] w-[73px] items-center justify-center rounded-[4px] bg-[#54a5dd]"><FaTwitter /></span>
                <span className="flex h-[44px] w-[73px] items-center justify-center rounded-[4px] bg-[#5d809f]">
                  <Svg w={22} h={20} vb="0 0 22 20"><path d="M21 0L0 11l5 2.500zM21 0L7 14.500V20l3.500-4zM21 0L11 14.500l6 3z" fill="currentColor" stroke="none" /></Svg>
                </span>
              </div>
              <div className="flex-1 bg-gradient-to-b from-[#d2d2d2] to-[#eee]" />
            </div>
            <span className="absolute right-[3px] top-[135px] h-[128px] w-[5px] rounded-full bg-[#707070]" />
          </div>
        </div>
      </div>
    </div>
  );
}

function ViewerWindow() {
  return (
    <div className="absolute left-[290px] top-[95px] flex h-[1271px] w-[2052px] flex-col rounded-t-[8px] bg-black shadow-[0_3px_16px_3px_#0008,0_0_0_1px_#242424]">
      <div className="flex h-[47px] shrink-0 items-center rounded-t-[8px] border-t border-[#3c3c3c] bg-[#2c2c2c] pb-[2px] text-[14px] leading-none text-white">
        <div className="ml-[7px] flex h-[34px] w-[159px] items-center overflow-hidden rounded-[4px] border border-[#1f1f1f] bg-[#313131]">
          <span className="flex h-full w-[34px] items-center justify-center bg-[#454545]"><Svg><circle cx="7.500" cy="7.500" r="6.500" strokeWidth="1.200" /><path d="M4.500 7.500h6M12 12l3 3" strokeWidth="1.400" /></Svg></span>
          <Fit w={28} className="ml-[14px]">80%</Fit>
          <Svg className="ml-[22px]"><path d="M1 5.500q4 4 7 5 3-1 7-5" /></Svg>
          <span className="ml-auto flex h-full w-[34px] items-center justify-center bg-[#454545]"><Svg><circle cx="7.500" cy="7.500" r="6.500" strokeWidth="1.200" /><path d="M4.500 7.500h6M7.500 4.500v6M12 12l3 3" strokeWidth="1.400" /></Svg></span>
        </div>
        <Fit w={304} className="ml-[708px] text-[14px] font-bold">Снимок экрана от 2021-11-21 21-45-29.png</Fit>
        <div className="ml-auto flex items-center pr-[13px]">
          <span className="flex h-[34px] w-[35px] items-center justify-center rounded-[4px] border border-[#1f1f1f] bg-[#454545]"><Svg><path d="M5 5V3q0-2 2-2h6q2 0 2 2v5q0 2-2 2h-2" strokeWidth="1.200" /><rect x="1" y="7" width="9" height="8" rx="2" opacity="0.600" /></Svg></span>
          <span className="ml-[7px] flex h-[34px] w-[35px] items-center justify-center rounded-[4px] border border-[#1f1f1f] bg-[#454545]"><Menu s={15} /></span>
          <span className="ml-[27px] mt-[6px] h-[2px] w-[8px] bg-white" />
          <span className="ml-[31px] h-[9px] w-[9px] border border-white" />
          <span className="ml-[26px] flex h-[20px] w-[20px] items-center justify-center rounded-full bg-[#e04a17]"><Cross s={10} /></span>
        </div>
      </div>
      <div className="mt-[35px]"><InnerScreen /></div>
      <span className="absolute left-[12px] top-[639px] flex h-[40px] w-[44px] items-center justify-center rounded-[5px] bg-[#323232] text-white"><Chev d={LEFT} className="-ml-px" /></span>
      <span className="absolute right-[12px] top-[639px] flex h-[40px] w-[44px] items-center justify-center rounded-[5px] bg-[#323232] text-white"><Chev d={RIGHT} /></span>
      <span className="absolute left-[982px] top-[1219px] flex h-[40px] w-[88px] items-center justify-between rounded-[5px] bg-[#353535] px-[15px] text-[#ddd]">
        <Svg w={15}><path d="M4 2.500a6.500 6.500 0 1 1-1 10.500M2 1v4h4.500" /><circle cx="8" cy="8" r="1.500" /></Svg>
        <Svg w={15}><path d="M12 2.500a6.500 6.500 0 1 0 1 10.500M14 1v4H9.500" /><circle cx="8" cy="8" r="1.500" /></Svg>
      </span>
    </div>
  );
}

export default function App() {
  return (
    <div className="relative flex h-[1440px] w-[2560px] flex-col overflow-hidden bg-[#353535] font-['Noto_Sans','Open_Sans',sans-serif] text-[#eee]">
      {/* top panel */}
      <div className="flex h-[27px] shrink-0 items-center bg-[#1d1d1d] pb-px text-[14px] leading-none">
        <Fit w={44} className="ml-[12px]">Обзор</Fit>
        <Svg className="ml-[35px]"><path d="M3 15H2.500Q1 15 1 13.500v-11Q1 1 2.500 1h11Q15 1 15 2.500v11" strokeWidth="1.400" /><circle cx="8.500" cy="8" r="4.300" strokeWidth="1.300" /><path d="M11.500 11l3.500 4M3 13h4" strokeWidth="1.500" /></Svg>
        <Fit w={170} className="ml-[6px]">Просмотр изображений</Fit>
        <Caret className="ml-[6px] h-[5px]" />
        <Fit w={140} className="ml-[947px]">Пн, 22 ноября  09:49</Fit>
        <div className="ml-auto flex items-center pr-[15px]">
          <Shield />
          <Fit w={14} className="ml-[24px]">ru</Fit>
          <Caret className="ml-[6px] mr-[32px] h-[5px]" />
          <Network />
          <span className="w-[13px]" /><Sound />
          <span className="w-[10px]" /><Power />
          <Caret className="ml-[11px] h-[5px]" />
        </div>
      </div>
      <div className="flex min-h-0 flex-1">
        {/* dock */}
        <div className="relative flex w-[72px] shrink-0 flex-col overflow-hidden">
          <Wallpaper />
          <div className="relative flex h-full flex-col items-center pt-[2px]">
            {dock.map((d, i) => (
              <div key={i} className="flex h-[68px] w-full shrink-0 items-center justify-center">
                <div className={"relative flex h-[64px] w-[64px] items-center justify-center rounded-[4px] " + (d.on ? "bg-[#434343]" : "")}>
                  {d.dot && <span className="absolute left-0 top-[29px] h-[6px] w-[6px] rounded-full bg-[#e95420]" />}
                  {d.icon}
                </div>
              </div>
            ))}
            <div className="mt-auto pb-[19px]"><AppGrid gap="gap-[6px]" dot="h-[6px] w-[6px]" /></div>
          </div>
        </div>
        {/* file manager */}
        <div className="flex min-w-0 flex-1 flex-col text-[#919191]">
          <div className="flex h-[47px] shrink-0 items-center border-b border-t border-b-[#282828] border-t-[#464646] bg-[#3d3d3d] pb-px text-[14px] leading-none">
            <div className="ml-[6px] flex h-[34px] w-[71px] rounded-[4px] border border-[#292929]">
              <span className="flex w-[35px] items-center justify-center border-r border-[#292929]"><Chev d={LEFT} className="-ml-px text-[#a5a5a5]" /></span>
              <span className="flex flex-1 items-center justify-center text-[#6c6c6c]"><Chev d={RIGHT} /></span>
            </div>
            <div className="ml-[726px] flex h-[34px] w-[840px] items-center rounded-[4px] border border-[#292929]">
              <span className="flex h-full w-[174px] items-center border-r border-[#292929] pl-[8px]"><Home /><Fit w={119} className="ml-[14px]">Домашняя папка</Fit></span>
              <span className="flex h-full w-[153px] items-center border-r border-[#292929] pl-[16px]"><Fit w={98}>Изображения</Fit><Caret className="ml-[17px] h-[6px]" /></span>
            </div>
            <span className="ml-[7px] flex h-[34px] w-[35px] items-center justify-center rounded-[4px] border border-[#292929]"><Svg className="-ml-px"><circle cx="7" cy="7" r="5.500" /><path d="M11 11l4 4" strokeWidth="1.300" /></Svg></span>
            <div className="ml-auto flex items-center pr-[13px]">
              <div className="flex h-[34px] w-[71px] rounded-[4px] border border-[#292929]">
                <span className="flex w-[35px] items-center justify-center border-r border-[#292929]"><Svg w={15}><path d="M2 2h2.500v2.500H2zM2 7h2.500v2.500H2zM2 12h2.500v2.500H2zM7 3.200h8M7 8.200h8M7 13.200h8" /></Svg></span>
                <span className="flex flex-1 items-center justify-center"><Caret className="h-[6px]" /></span>
              </div>
              <span className="ml-[6px] flex h-[34px] w-[36px] items-center justify-center rounded-[4px] border border-[#292929]"><Menu s={15} /></span>
              <span className="ml-[26px] mt-[6px] h-px w-[8px] bg-[#a5a5a5]" />
              <Svg w={9} vb="0 0 9 9" className="ml-[32px]"><path d="M.500 2.500h5v6h-5zM3 .500h5.500V6.500" /></Svg>
              <span className="ml-[26px] flex h-[20px] w-[20px] items-center justify-center rounded-full bg-[#585858] text-[#ddd]"><Cross /></span>
            </div>
          </div>
          <div className="flex min-h-0 flex-1">
            <div className="flex w-[189px] shrink-0 flex-col border-r border-[#2b2b2b] bg-[#3a3a3a] pt-[3px] text-[14px] leading-none">
              {places.map(([name, w, icon]) => (
                <div key={name} className={"my-px flex h-[36px] shrink-0 items-center pl-[14px] " + (name === "Изображения" ? "bg-[#e04a17] text-[#dbc9c2]" : "")}>
                  {icon}<Fit w={w} className="ml-[8px]">{name}</Fit>
                </div>
              ))}
              <div className="mt-[4px] h-px shrink-0 bg-[#2f2f2f]" />
              {[["data", 30], ["Redmi 9C NFC", 94]].map(([name, w], i) => (
                <div key={name} className={"flex h-[38px] shrink-0 items-center pl-[14px] pr-[14px] " + (i === 0 ? "mt-[4px]" : "")}>
                  {i === 0
                    ? <Svg><rect x="1" y="1" width="14" height="14" rx="2" /><path d="M1 10.500h14M3 13h10" /></Svg>
                    : <Svg><rect x="3.500" y="0.500" width="9" height="15" rx="1.500" /><path d="M4 2h8M4 14h8" strokeWidth="1.500" /></Svg>}
                  <Fit w={w as number} className="ml-[8px]">{name}</Fit>
                  <span className="ml-auto flex h-[28px] w-[28px] items-center justify-center rounded-full border border-[#313131]">
                    <Svg w={10} vb="0 0 10 10"><path d="M5 0l4 6H1zM1 7.500h8V10H1z" fill="currentColor" stroke="none" /></Svg>
                  </span>
                </div>
              ))}
              <div className="mt-[4px] h-px shrink-0 bg-[#2f2f2f]" />
              <div className="mt-[5px] flex h-[36px] items-center pl-[14px]">
                <Svg><path d="M8 2.500v11M2.500 8h11" /></Svg><Fit w={93} className="ml-[8px]">Другие места</Fit>
              </div>
            </div>
            <div className="flex flex-1 flex-col justify-between bg-[#363636]">
              <div className="ml-[106px] mt-[12px] h-[30px] w-[59px] border-2 border-[#d9d9d6] bg-[#4b3c36]" />
              <div className="flex h-[24px] w-[519px] items-center self-end rounded-tl-[4px] border-l border-t border-[#262626] bg-[#3c3c3c] pl-[11px] text-[14px] leading-none">
                <Fit w={494}>Выделен объект «Снимок экрана от 2021-11-21 21-45-29.png»  (273,2 kB)</Fit>
              </div>
            </div>
          </div>
        </div>
      </div>
      <ViewerWindow />
    </div>
  );
}
